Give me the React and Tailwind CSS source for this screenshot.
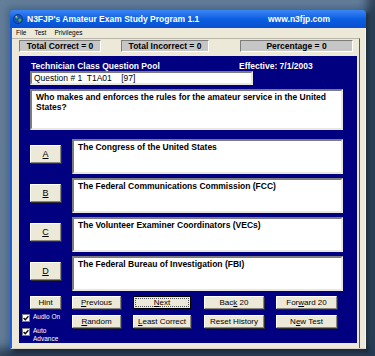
import React from 'react';

const raised =
  'bg-[#ece9d8] border border-t-white border-l-white border-r-[#8a887c] border-b-[#8a887c] shadow-[1px_1px_0_#2e2e2e] flex items-center justify-center text-[8px] leading-none text-black';

const sunken =
  'bg-white border-2 border-t-[#7d7d7d] border-l-[#7d7d7d] border-r-[#e9e7df] border-b-[#e9e7df]';

const Btn = ({ className, children }) => (
  <div className={`${raised} ${className}`}>
    <span>{children}</span>
  </div>
);

const Key = ({ children }) => <span className="underline">{children}</span>;

const Globe = () => (
  <svg width="10" height="10" viewBox="0 0 10 10">
    <circle cx="5" cy="5" r="4.6" fill="#1d4fb8" stroke="#0b2a70" strokeWidth="0.6" />
    <path d="M2 3.2 L4 2 L5 3.4 L4.2 4.8 L3 4.4 Z" fill="#3cb34a" />
    <path d="M5.6 5 L7.8 4.4 L8.4 6.4 L6.6 8.2 L5.4 7 Z" fill="#3cb34a" />
    <circle cx="3.3" cy="2.6" r="0.8" fill="#ffffff" opacity="0.6" />
  </svg>
);

const Check = ({ label }) => (
  <div className="flex items-start gap-[3px]">
    <div className="w-[8px] h-[8px] bg-white border border-[#7d7d7d] flex items-center justify-center mt-px shrink-0">
      <svg width="6" height="6" viewBox="0 0 6 6">
        <path d="M0.6 3 L2.3 4.7 L5.4 1.2" fill="none" stroke="#000" strokeWidth="1.3" />
      </svg>
    </div>
    <span className="text-white text-[6.5px] leading-[8px] whitespace-nowrap">{label}</span>
  </div>
);

const answers = [
  ['A', 'The Congress of the United States'],
  ['B', 'The Federal Communications Commission (FCC)'],
  ['C', 'The Volunteer Examiner Coordinators (VECs)'],
  ['D', 'The Federal Bureau of Investigation (FBI)'],
];

export default function App() {
  return (
    <div className="w-[375px] h-[356px] bg-[#4a6886] shadow-[inset_-8px_-8px_10px_rgba(10,20,40,0.55),inset_6px_6px_8px_rgba(140,160,185,0.45)] pt-[10px] pl-[10px] font-['Liberation_Sans',Arial,sans-serif] overflow-hidden">
      <div className="w-[356px] h-[339px] flex flex-col shadow-[3px_3px_4px_rgba(0,0,0,0.45)]">
        {/* title bar */}
        <div className="h-[18px] rounded-t-[4px] bg-gradient-to-b from-[#3b86f4] via-[#0a5ee2] to-[#0a50cf] flex items-center pl-[3px] text-white font-bold text-[8.5px] leading-none">
          <Globe />
          <span className="ml-[4px] w-[241px]">N3FJP's Amateur Exam Study Program 1.1</span>
          <span>www.n3fjp.com</span>
        </div>

        {/* body */}
        <div className="flex-1 bg-[#ece9d8] border-l-2 border-[#1f60dc] border-r border-r-[#f7f6f1] border-b border-b-[#d8d5c8] flex flex-col">
          <div className="h-[10px] flex items-center pl-[4px] gap-[8px] text-[6.5px] leading-none text-black">
            <span>File</span>
            <span>Test</span>
            <span>Privileges</span>
          </div>
          <div className="w-[348px] flex-1 border-t border-[#b9b6a8] border-r border-r-[#5a5a5a] pl-[7px] pt-px">
            {/* stats */}
            <div className="flex h-[12px] text-[8.5px] font-bold leading-none text-black">
              <div className="w-[82px] bg-[#c6c6c6] border border-t-[#7d7d7d] border-l-[#7d7d7d] border-r-white border-b-white flex items-center justify-center">
                Total Correct = 0
              </div>
              <div className="w-[88px] ml-[20px] bg-[#c6c6c6] border border-t-[#7d7d7d] border-l-[#7d7d7d] border-r-white border-b-white flex items-center justify-center">
                Total Incorrect = 0
              </div>
              <div className="w-[113px] ml-[31px] bg-[#c6c6c6] border border-t-[#7d7d7d] border-l-[#7d7d7d] border-r-white border-b-white flex items-center justify-center">
                Percentage = 0
              </div>
            </div>

            {/* main panel */}
            <div className="mt-[4px] w-[338px] h-[287px] bg-[#000080] pl-[11px] pt-[5px]">
              <div className="flex h-[10px] text-white font-bold text-[8.5px] leading-[10px]">
                <span className="w-[209px] pl-px">Technician Class Question Pool</span>
                <span>Effective: 7/1/2003</span>
              </div>
              <div className={`${sunken} w-[223px] h-[14px] pl-[2px] text-[8.5px] leading-[10px] text-black whitespace-pre`}>
                Question # 1  T1A01    [97]
              </div>
              <div className={`${sunken} mt-[4px] w-[313px] h-[41px] pl-[4px] pt-[1px] text-[8.5px] font-bold leading-[10px] text-black`}>
                Who makes and enforces the rules for the amateur service in the United States?
              </div>

              <div className="mt-[9px] flex flex-col gap-[4px]">
                {answers.map(([k, t]) => (
                  <div key={k} className="flex">
                    <Btn className="w-[31px] h-[18px] mt-[6px] text-[9px]">
                      <Key>{k}</Key>
                    </Btn>
                    <div className={`${sunken} ml-[11px] w-[271px] h-[35px] pl-[4px] pt-px text-[8.5px] font-bold leading-[10px] text-black`}>
                      {t}
                    </div>
                  </div>
                ))}
              </div>

              {/* bottom controls */}
              <div className="mt-[5px] -ml-[8px] flex">
                <div className="w-[39px] flex flex-col">
                  <Btn className="ml-[8px] w-[31px] h-[13px]">Hint</Btn>
                  <div className="mt-[4px]">
                    <Check label="Audio On" />
                  </div>
                  <div className="mt-[5px]">
                    <Check label={<>Auto<br />Advance</>} />
                  </div>
                </div>
                <div className="ml-[11px] flex flex-col gap-[6px]">
                  <div className="flex h-[13px]">
                    <Btn className="w-[49px]">
                      <Key>P</Key>revious
                    </Btn>
                    <div className="ml-[12px] w-[58px] bg-[#ece9d8] border border-black flex items-center justify-center p-px text-[8px] leading-none">
                      <div className="w-full h-full border border-dotted border-[#555] flex items-center justify-center">
                        <span>
                          <Key>N</Key>ext
                        </span>
                      </div>
                    </div>
                    <Btn className="ml-[13px] w-[60px]">
                      Bac<Key>k</Key> 20
                    </Btn>
                    <Btn className="ml-[12px] w-[61px]">
                      For<Key>w</Key>ard 20
                    </Btn>
                  </div>
                  <div className="flex h-[13px]">
                    <Btn className="w-[49px]">
                      <Key>R</Key>andom
                    </Btn>
                    <Btn className="ml-[12px] w-[58px]">
                      <Key>L</Key>east Correct
                    </Btn>
                    <Btn className="ml-[13px] w-[60px]">Reset History</Btn>
                    <Btn className="ml-[12px] w-[61px]">
                      N<Key>e</Key>w Test
                    </Btn>
                  </div>
                </div>
              </div>
            </div>
          </div>
        </div>
      </div>
    </div>
  );
}
